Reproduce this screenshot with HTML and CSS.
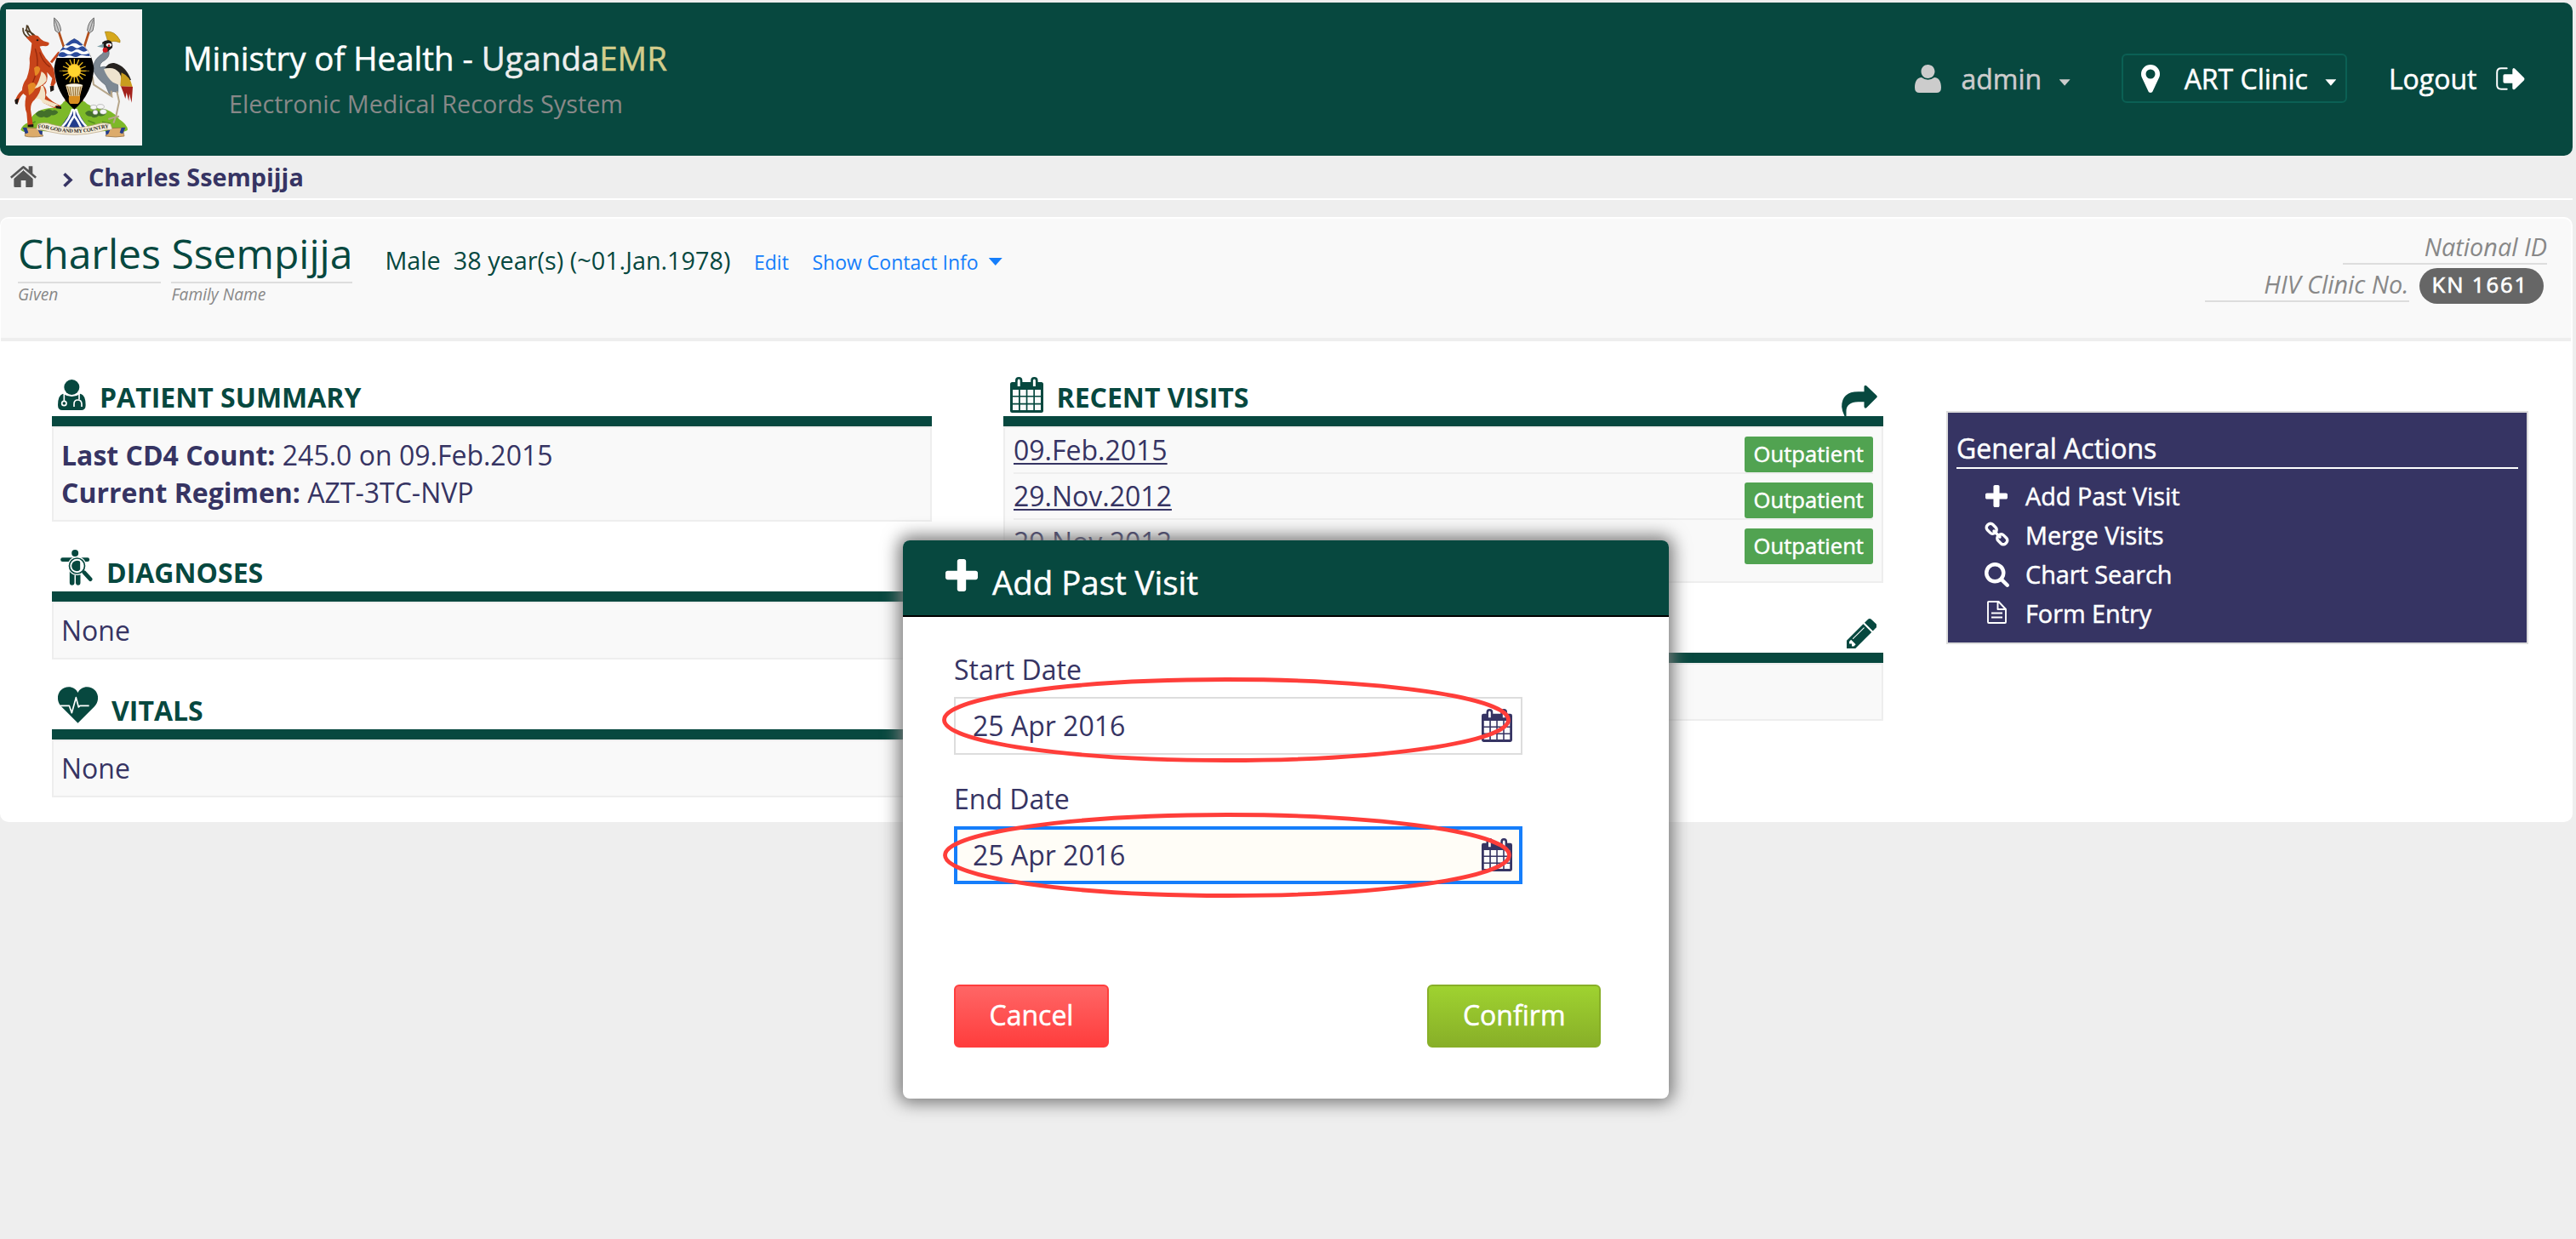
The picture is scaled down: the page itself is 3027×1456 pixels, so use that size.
FILE: index.html
```html
<!DOCTYPE html>
<html lang="en">
<head>
<meta charset="utf-8">
<title>UgandaEMR - Charles Ssempijja</title>
<link rel="stylesheet" href="styles.css">
</head>
<body>
<svg class="defs" width="0" height="0" aria-hidden="true">
  <symbol id="i-calendar" viewBox="0 0 39 42">
    <path fill="currentColor" d="M2.5 6H6V4.2Q6 0 10.2 0T14.4 4.2V6H24.2V4.2Q24.2 0 28.4 0T32.6 4.2V6H36.500Q39 6 39 8.500V39.500Q39 42 36.500 42H2.500Q0 42 0 39.500V8.500Q0 6 2.500 6Z"/>
    <path fill="#fff" d="M8.700 4.500Q8.700 2.500 10.200 2.500T11.700 4.500V11H8.700ZM26.900 4.500Q26.900 2.500 28.400 2.500T29.900 4.500V11H26.900Z"/>
    <path fill="#fbfbfb" d="M3 15h7v7H3zM11.800 15h6.900v7h-6.900zM20.400 15h6.900v7h-6.900zM29 15h7v7h-7zM3 23.600h7v7.200H3zM11.800 23.600h6.900v7.200h-6.900zM20.400 23.600h6.900v7.200h-6.900zM29 23.600h7v7.200h-7zM3 32.400h7v6.600H3zM11.800 32.400h6.900v6.600h-6.900zM20.400 32.400h6.900v6.600h-6.900zM29 32.400h7v6.600h-7z"/>
  </symbol>
  <symbol id="i-plus" viewBox="192 128 1408 1408">
    <path fill="currentColor" d="M1600 736v192q0 40-28 68t-68 28h-416v416q0 40-28 68t-68 28h-192q-40 0-68-28t-28-68v-416h-416q-40 0-68-28t-28-68v-192q0-40 28-68t68-28h416v-416q0-40 28-68t68-28h192q40 0 68 28t28 68v416h416q40 0 68 28t28 68z"/>
  </symbol>
</svg>

<div class="page">
  <header class="topbar">
    <svg class="crest" viewBox="21 33 480 480">
      <rect x="21" y="33" width="480" height="480" fill="#f4f4f4"/>
      <!-- spears -->
      <g stroke="#b4501c" stroke-width="8"><path d="M206 108L236 200M315 108L286 200"/><path d="M236 345L218 412M286 345L304 412" stroke="#8c3a14"/></g>
      <path d="M191 63Q212 78 215 108L206 116L195 108Q188 86 191 63ZM331 63Q310 78 308 108L316 116L327 108Q334 86 331 63Z" fill="#c9c9c9" stroke="#666" stroke-width="3"/>
      <path d="M194 70L207 110M328 70L316 110" stroke="#555" stroke-width="2"/>
      <!-- mound -->
      <path d="M73 458Q78 440 100 432Q120 388 170 382Q215 380 225 358H298Q310 374 350 380Q400 388 420 420Q450 440 450 458Q430 472 380 462L262 466L140 462Q90 474 73 458Z" fill="#7db928"/>
      <path d="M125 402q14-18 30-10q16-14 30-2q12-6 20 6q-8 12-24 10q-10 14-26 6q-18 6-30-10ZM300 398q12-14 22-4q14-12 28 0q14-6 24 6q-10 14-26 8q-16 12-26 2q-16 2-22-12Z" fill="#43702a"/>
      <path d="M105 440l20-12M310 425l25 10M360 430l30 6" stroke="#558f1e" stroke-width="5"/>
      <path d="M262 378L212 450H310Z" fill="#233d8c"/>
      <path d="M256 384Q246 420 218 448M262 380V412M268 384Q278 420 306 448M262 408Q250 424 238 450M262 408Q274 424 286 450" stroke="#fff" stroke-width="8" fill="none"/>
      <g fill="#f6f6f6" stroke="#888" stroke-width="1.500"><ellipse cx="330" cy="378" rx="12" ry="8"/><ellipse cx="354" cy="376" rx="13" ry="8"/><ellipse cx="364" cy="394" rx="12" ry="9"/><ellipse cx="336" cy="396" rx="9" ry="8"/></g>
      <!-- kob -->
      <path d="M99 132Q80 122 81 98M108 128Q90 116 95 88M118 126Q104 112 97 90M124 128Q112 112 88 106" fill="none" stroke="#4c3a22" stroke-width="5"/>
      <path d="M92 132L104 127Q118 120 134 127Q142 138 154 145L172 150Q176 160 162 163Q148 160 140 164Q148 188 162 206Q180 222 190 244L197 290L186 308L178 300L184 276L166 254Q172 290 152 300Q168 316 162 336Q180 358 212 372L214 382L190 380L152 362L140 332L122 352Q108 362 108 386L116 440L98 446L94 398Q84 374 92 338L82 330Q70 340 64 362L52 358Q60 332 78 318Q78 298 94 276Q108 236 104 206Q110 176 112 152Z" fill="#c7441a"/>
      <path d="M124 172Q138 214 128 252Q120 290 100 318M140 184Q150 220 176 236" stroke="#96290c" stroke-width="4" fill="none"/>
      <path d="M98 300Q120 280 128 304Q120 326 102 336ZM120 240Q134 226 142 242Q138 262 124 268Z" fill="#e58a25"/>
      <path d="M146 252Q166 262 164 284Q150 304 122 312Q140 286 146 252ZM152 302Q164 330 158 350L206 370L190 378L150 362Q142 340 122 352Q144 326 144 304Z" fill="#f2e3c6"/>
      <path d="M180 220L209 184" stroke="#c7441a" stroke-width="9"/>
      <path d="M176 304l14-2v16l-12 6zM98 440l20-2v10h-20zM196 372l20 4v8l-18-2zM52 352l14-6-4 22-8-2z" fill="#1b1512"/>
      <ellipse cx="132" cy="142" rx="4" ry="3" fill="#1b1512"/>
      <!-- crane -->
      <path d="M370 112Q404 106 423 142V150Q398 140 382 152Z" fill="#d6a81c" stroke="#9a7a14" stroke-width="2"/>
      <path d="M384 180Q388 200 370 212Q350 222 352 238Q380 228 396 250Q420 284 416 326L398 322L388 338L372 300Q340 276 328 246Q328 214 352 196Q368 188 366 172Z" fill="#7d8893" stroke="#55606b" stroke-width="2"/>
      <path d="M370 240Q382 220 402 222Q444 232 462 282L430 290Q412 240 370 240Z" fill="#26221f"/>
      <path d="M366 244Q400 232 420 256Q434 278 426 302L398 290Q378 276 366 244Z" fill="#eee3cf"/>
      <path d="M428 256Q460 270 467 306L424 304Z" fill="#c99c1e"/>
      <path d="M426 304L468 306L464 362L456 330L454 356L446 326L442 348L434 324Z" fill="#a3201a"/>
      <path d="M360 150Q370 140 384 142Q400 148 396 168L380 182L366 170Z" fill="#1d1a18"/>
      <path d="M366 154L342 164L364 168Z" fill="#7fa0a8"/><ellipse cx="384" cy="158" rx="10" ry="6" fill="#fff"/><circle cx="384" cy="161" r="4" fill="#d22"/>
      <circle cx="371" cy="176" r="9" fill="#d0151c"/>
      <path d="M326 270L330 298L394 340L392 320M412 322L420 358L408 414M408 412L382 420M408 412L400 434M408 412L420 410" stroke="#b6a68a" stroke-width="6" fill="none"/>
      <!-- shield -->
      <path d="M262 136Q322 168 331 240Q326 330 262 386Q196 330 191 240Q200 168 262 136Z" fill="#000"/>
      <path d="M262 136Q296 154 315 187L322 204H201L208 187Q228 154 262 136Z" fill="#fff"/>
      <path d="M262 136Q280 144 292 158Q284 164 274 156Q262 148 250 156Q240 164 231 158Q244 144 262 136ZM222 166q10 8 20 0t20 0 20 0 18 2l8 10q-12 8-24 0t-22 0-22 0-28 2zM208 188q12-8 24 0t24 0 24 0 34 0l3 10q-14 0-20-2-10-4-20 2t-22 0-22 0-28 0z" fill="#2a4a9c"/>
      <g stroke="#e9b91c" stroke-width="4"><path d="M262 207V292M219 250H305M232 220L292 280M292 220L232 280M246 210L278 290M278 210L246 290M222 234L302 266M222 266L302 234"/></g>
      <path d="M209 250H222M302 250H315" stroke="#8b6f16" stroke-width="3"/>
      <circle cx="262" cy="249" r="23" fill="#ffd52e" stroke="#d9981c" stroke-width="2"/>
      <path d="M232 300Q262 290 291 300L282 340Q284 360 274 366H248Q240 360 243 340Z" fill="#d98e1f"/>
      <path d="M232 302L243 338L280 338L291 302Z" fill="#ead9b4"/><path d="M238 304L246 336M247 306L251 338M257 306L259 338M267 306L265 338M276 306L272 338M285 304L279 336" stroke="#8c6427" stroke-width="3"/>
      <ellipse cx="262" cy="301" rx="30" ry="6" fill="#faf6ea" stroke="#98865c"/>
      <!-- ribbon -->
      <path d="M82 450L140 452L152 480Q112 486 88 480Q92 464 82 450ZM440 450L384 452L372 480Q410 486 438 480Q432 464 440 450Z" fill="#dcab6a" stroke="#8b6a3e" stroke-width="2"/>
      <path d="M80 450l14 0 6 18-10 4zM442 450l-14 0-6 18 10 4zM134 458l16 4-2 14-8-4zM388 458l-16 4 2 14 8-4z" fill="#233d8c"/>
      <path d="M133 437Q160 430 180 438Q262 462 342 438Q364 430 390 437L396 456Q372 456 352 464Q262 486 172 464Q152 456 128 458Z" fill="#f7eedb" stroke="#b39e7c" stroke-width="2"/>
      <path id="motto" d="M134 453Q152 450 172 456Q262 480 350 456Q372 450 392 452" fill="none"/>
      <text class="motto"><textPath href="#motto" textLength="252">FOR GOD AND MY COUNTRY</textPath></text>
    </svg>
    <div class="brand">
      <div class="brand-title">Ministry of Health - <span class="soft">Uganda</span><span class="gold">EMR</span></div>
      <div class="brand-sub">Electronic Medical Records System</div>
    </div>
    <nav class="usernav">
      <svg class="ico-user" viewBox="0 0 31 33"><path fill="currentColor" d="M15.500 0C20 0 23.500 3.600 23.500 8S20 16 15.500 16 7.500 12.500 7.500 8 11 0 15.500 0ZM8 15Q15.500 20.500 23 15C28.500 15 31 20 31 27Q31 33 25.500 33H5.500Q0 33 0 27C0 20 2.500 15 8 15Z"/></svg>
      <span class="user-name">admin</span><i class="caret"></i>
      <div class="location">
        <svg class="ico-pin" viewBox="384 128 1024 1536"><path fill="currentColor" d="M1152 640q0-106-75-181t-181-75-181 75-75 181 75 181 181 75 181-75 75-181zm256 0q0 109-33 179l-364 774q-16 33-47.500 52t-67.500 19-67.500-19-46.500-52l-365-774q-33-70-33-179 0-212 150-362t362-150 362 150 150 362z"/></svg>
        <span class="location-name">ART Clinic</span><i class="caret"></i>
      </div>
      <span class="logout">Logout</span>
      <svg class="ico-logout" viewBox="1360 82 102 82"><path fill="none" stroke="currentColor" stroke-width="6" stroke-linecap="round" d="M1398 86H1378Q1363 86 1363 101V146Q1363 160 1378 160H1398"/><path fill="currentColor" d="M1390 107H1418V90Q1420 82 1427 87L1459 119Q1463 124 1459 129L1427 160Q1420 165 1418 157V139H1390Q1385 139 1385 134V112Q1385 107 1390 107Z"/></svg>
    </nav>
  </header>

  <div class="crumbs">
    <svg class="ico-home" viewBox="36 582 93 75"><path fill="#555" d="M82.500 595L116 624V653Q116 657 112 657H91V633H74V657H53Q49 657 49 653V624Z"/><path fill="none" stroke="#eee" stroke-width="3" d="M44 630L82.500 596L121 630"/><path fill="#555" d="M36 620L78 584Q82.500 580 87 584L101 596V583H115V608L129 620L124 626L82.500 591L41 626Z"/></svg>
    <svg class="ico-chev" viewBox="0 0 12 17"><path fill="none" stroke="#363463" stroke-width="3.600" d="M1.500 1.300L9 8.500L1.500 15.700"/></svg>
    <span>Charles Ssempijja</span>
  </div>

  <main class="card">
    <section class="patient">
      <div class="name"><div class="name-value">Charles</div><div class="name-label">Given</div></div>
      <div class="name"><div class="name-value">Ssempijja</div><div class="name-label">Family Name</div></div>
      <div class="demo"><span>Male</span><span class="age">38 year(s) (~01.Jan.1978)</span><a class="edit">Edit</a><a class="contact">Show Contact Info</a><i class="caret blue"></i></div>
      <div class="ids">
        <div class="id-row"><span class="id-label">National ID</span></div>
        <div class="id-row second"><span class="id-label">HIV Clinic No.</span><span class="pill">KN 1661</span></div>
      </div>
    </section>

    <div class="columns">
      <div class="col">
        <h3 class="first"><svg class="ico-doctor" viewBox="54 48 99 108"><circle cx="103" cy="75" r="27" fill="currentColor"/><path fill="currentColor" d="M72 98Q103 118 134 98Q152 103 152 138Q152 156 136 156H70Q54 156 54 138Q54 103 72 98Z"/><g fill="none" stroke="#fff" stroke-width="5"><path d="M76 97V124M129 97V118M111 144V134Q111 120 124 120T138 134V144"/><circle cx="76" cy="132" r="8"/></g></svg>PATIENT SUMMARY</h3>
        <div class="box"><div><b>Last CD4 Count:</b> 245.0 on 09.Feb.2015</div><div><b>Current Regimen:</b> AZT-3TC-NVP</div></div>
        <h3><svg class="ico-diag" viewBox="64 648 113 126"><g fill="currentColor"><circle cx="115" cy="660" r="12"/><rect x="64" y="676" width="102" height="14" rx="7"/><path d="M96 680H134V764Q134 773 126 773T117.500 764V738H113V764Q113 773 104.500 773T96 764Z"/></g><circle cx="122" cy="705" r="33" fill="#fff"/><path d="M146 729L168 751" stroke="#fff" stroke-width="22"/><circle cx="122" cy="705" r="27" fill="none" stroke="currentColor" stroke-width="5"/><path fill="currentColor" d="M122 686Q133 686 133 692V718Q130 724 121 724Q103 721 103 705T122 686Z"/><path d="M147 728L169 752" stroke="currentColor" stroke-width="14" stroke-linecap="round"/></svg>DIAGNOSES</h3>
        <div class="box">None</div>
        <h3><svg class="ico-heart" viewBox="54 1133 141 127"><path fill="currentColor" d="M124.500 1260L66 1202C50 1184 50 1160 64 1145C82 1126 114 1130 124.500 1153C135 1130 167 1126 185 1145C199 1160 199 1184 183 1202Z"/><path fill="none" stroke="#fff" stroke-width="5" stroke-linejoin="round" d="M62 1199H94L103 1224L118 1170L127 1204L132 1199H164"/></svg>VITALS</h3>
        <div class="box">None</div>
      </div>

      <div class="col mid">
        <h3 class="first"><svg class="ico-cal"><use href="#i-calendar"/></svg>RECENT VISITS<svg class="ico-share" viewBox="26 69 125 108"><path fill="currentColor" d="M36 177Q27 160 26 144Q26 91 84 91H105V73Q107 66 113 70L149 104Q153 108 149 112L113 148Q107 152 105 144V127H84Q42 128 42 160V177Z"/></svg></h3>
        <div class="box visits">
          <div class="visit"><a>09.Feb.2015</a><span class="badge">Outpatient</span></div>
          <div class="visit"><a>29.Nov.2012</a><span class="badge">Outpatient</span></div>
          <div class="visit"><a>29.Nov.2012</a><span class="badge">Outpatient</span></div>
        </div>
        <h3><svg class="ico-pencil" viewBox="128 149 1515 1515"><path fill="currentColor" d="M491 1536l91-91-235-235-91 91v107h128v128h107zm523-928q0-22-22-22-10 0-17 7l-542 542q-7 7-7 17 0 22 22 22 10 0 17-7l542-542q7-7 7-17zm-54-192l416 416-832 832h-416v-416zm683 96q0 53-37 90l-166 166-416-416 166-165q36-38 90-38 53 0 91 38l235 234q37 39 37 91z"/></svg></h3>
        <div class="box empty"></div>
      </div>

      <aside class="actions">
        <h4>General Actions</h4>
        <ul>
          <li><span class="ai"><svg width="26" height="26"><use href="#i-plus"/></svg></span>Add Past Visit</li>
          <li><span class="ai up"><svg width="29" height="29" viewBox="0 0 29 29"><g fill="none" stroke="#fff" stroke-width="3.400"><rect x="-6.200" y="-4.500" width="12.400" height="9" rx="3.800" transform="translate(8.200 8.200) rotate(45)"/><rect x="-6.200" y="-4.500" width="12.400" height="9" rx="3.800" transform="translate(20.800 20.800) rotate(45)"/><path d="M11 11L18 18" stroke-linecap="round"/></g></svg></span>Merge Visits</li>
          <li><span class="ai"><svg width="29" height="29" viewBox="64 128 1664 1664"><path fill="#fff" d="M1216 832q0-185-131.500-316.500t-316.500-131.500-316.500 131.500-131.500 316.500 131.500 316.500 316.500 131.500 316.500-131.500 131.500-316.500zm512 832q0 52-38 90t-90 38q-54 0-90-38l-343-342q-179 124-399 124-143 0-273.500-55.500t-225-150-150-225-55.500-273.500 55.500-273.500 150-225 225-150 273.500-55.500 273.500 55.500 225 150 150 225 55.500 273.500q0 220-124 399l343 343q37 37 37 90z"/></svg></span>Chart Search</li>
          <li><span class="ai up"><svg width="23" height="27" viewBox="0 0 23 27"><path fill="none" stroke="#fff" stroke-width="1.900" stroke-linejoin="round" d="M1 2V25Q1 26 2 26H21Q22 26 22 25V10L13.500 1H2Q1 1 1 2ZM12.500 1V10H22M5 14.500H18M5 19.500H18"/></svg></span>Form Entry</li>
        </ul>
      </aside>
    </div>
  </main>
</div>

<div class="dialog">
  <div class="dialog-head"><svg width="38" height="38"><use href="#i-plus"/></svg><h2>Add Past Visit</h2></div>
  <div class="dialog-body">
    <label>Start Date</label>
    <div class="field">25 Apr 2016<svg class="field-cal"><use href="#i-calendar"/></svg></div>
    <label>End Date</label>
    <div class="field focus">25 Apr 2016<svg class="field-cal"><use href="#i-calendar"/></svg></div>
    <div class="buttons"><span class="btn cancel">Cancel</span><span class="btn confirm">Confirm</span></div>
  </div>
  <svg class="marks" viewBox="0 0 900 656"><g fill="none" stroke="#ff3e3a" stroke-width="4.800"><ellipse cx="380" cy="211" rx="331.500" ry="47.500"/><ellipse cx="381" cy="370" rx="331.500" ry="47.500"/></g></svg>
</div>
</body>
</html>
```
FILE: styles.css
```css
* { box-sizing: border-box; }
html { height: 100%; overflow: hidden; }
body {
  margin: 0;
  height: 100%;
  padding-top: 3px;
  background: #eee;
  color: #363463;
  font: 32px/44px "Open Sans", sans-serif;
  overflow: hidden;
}
.defs { position: absolute; }
svg { display: block; flex: none; }
.page { width: 3023px; }

/* top bar */
.topbar {
  display: flex;
  align-items: flex-start;
  height: 180px;
  padding: 8px 56px 0 7px;
  background: #07483f;
  border-radius: 10px;
  color: #fff;
  white-space: nowrap;
}
.crest { width: 160px; height: 160px; }
.motto { font: bold 19px "Liberation Serif", serif; fill: #2c2622; }
.brand { margin: 35px 0 0 48px; }
.brand-title { font-size: 38.4px; line-height: 44px; }
.soft { color: #eee; }
.gold { color: #d2cd8c; }
.brand-sub { margin-top: 10px; padding-left: 54px; font-size: 28.8px; line-height: 43px; color: #888; }
.usernav { display: flex; align-items: center; height: 58px; margin: 52px 0 0 auto; }
.brand-title, .usernav, .badge, .actions, .dialog-head, .btn { -webkit-text-stroke: 0.5px; }
.ico-user { width: 31px; height: 33px; color: #ccc; }
.user-name { margin-left: 23.500px; padding-top: 1px; color: #ccc; }
.caret {
  width: 13px;
  height: 7.500px;
  margin: 10px 0 0 20.500px;
  background: currentColor;
  clip-path: polygon(0 0, 100% 0, 50% 100%);
}
.user-name + .caret { background: #ccc; }
.location {
  display: flex;
  align-items: center;
  height: 58px;
  margin-left: 60.500px;
  padding: 0 11px 0 20.500px;
  border: 2px solid #0b6054;
  border-radius: 6px;
}
.ico-pin { width: 22px; height: 33px; }
.location-name { margin-left: 29px; padding-top: 1px; }
.logout { margin-left: 48.500px; padding-top: 1px; }
.ico-logout { width: 34px; height: 27px; margin-left: 22.500px; }

/* breadcrumbs */
.crumbs {
  display: flex;
  align-items: center;
  height: 52px;
  padding-left: 12px;
  border-bottom: 2px solid #fff;
  font-size: 28.8px;
  font-weight: 700;
}
.ico-home { width: 31px; height: 25px; margin-bottom: 2px; }
.ico-chev { width: 12px; height: 17px; margin: 7px 18px 0 31px; }

/* patient card */
.card { height: 711px; margin-top: 20px; padding: 2px 2px 0 1px; background: #fff; border-radius: 10px; }
.patient {
  display: flex;
  align-items: flex-start;
  height: 144px;
  padding: 8px 28px 0 20px;
  background: #f9f9f9;
  border-bottom: 4px solid #eee;
  border-radius: 8px 8px 0 0;
  color: #07483f;
  white-space: nowrap;
}
.name { margin-right: 12.500px; }
.name-value { font-size: 48px; line-height: 66px; border-bottom: 2px solid #ddd; }
.name-label { font-size: 19.2px; line-height: 25px; font-style: italic; color: #888; }
.demo { display: flex; align-items: baseline; margin: 19px 0 0 25.500px; font-size: 28.8px; }
.age { margin-left: 15px; }
.demo a { font-size: 23.04px; color: #157efb; }
.edit { margin-left: 27.500px; }
.contact { margin-left: 27.500px; }
.caret.blue { align-self: center; width: 16px; height: 9px; margin: 1px 0 0 12px; background: #157efb; }
.ids { margin: 5px 0 0 auto; font-size: 28.8px; line-height: 39px; font-style: italic; color: #888; }
.id-row { display: flex; justify-content: flex-end; }
.id-row.second { margin-top: 3px; padding-right: 4px; }
.id-label { width: 240px; height: 41px; text-align: right; border-bottom: 2px solid #ddd; }
.pill {
  height: 42px;
  margin: 1px 0 0 12px;
  padding: 0 18px 0 15px;
  border-radius: 21px;
  background: #666;
  color: #fff;
  font-size: 25.6px;
  font-style: normal;
  font-weight: 400;
  letter-spacing: 1.900px;
  -webkit-text-stroke: 0.7px;
}

/* columns */
.columns { display: flex; align-items: flex-start; padding: 0 50px 0 60px; }
.col { width: 1034px; }
.mid { margin: 0 74px 0 84px; }
h3 {
  display: flex;
  align-items: flex-end;
  height: 94px;
  margin: 0;
  border-bottom: 12px solid #07483f;
  padding-left: 7px;
  color: #07483f;
  font-size: 32px;
  line-height: 45px;
}
h3.first { height: 100px; }
.ico-doctor { width: 33px; height: 36px; margin: 0 16px 7px 0; }
.ico-diag { width: 38px; height: 42px; margin: 0 16px 7px 3px; }
.ico-heart { width: 47px; height: 43px; margin: 0 16px 7px 0; }
.ico-cal { width: 39px; height: 42px; margin: 0 15.500px 4px 1px; }
.ico-share { width: 42px; height: 36px; margin: 0 7.500px 0 auto; }
.ico-pencil { width: 35.500px; height: 35.500px; margin: 0 8px 5px auto; }
.box { padding: 9.500px 9px 10.500px; background: #f9f9f9; border: 2px solid #eee; }
.visits { height: 184px; padding: 0 10px; }
.visit { display: flex; align-items: flex-end; justify-content: space-between; height: 54px; border-bottom: 2px solid #eee; }
.visit:last-child { height: 52px; border: 0; }
.visit a { line-height: 51px; align-self: flex-start; text-decoration: underline; text-decoration-thickness: 2px; text-underline-offset: 3px; }
.badge { height: 42px; padding: 0 11px; background: #51a351; border-radius: 3px; color: #fff; font-size: 25.6px; line-height: 41px; }
.empty { height: 68px; }

.actions { width: 684px; height: 274px; margin-top: 82px; padding: 20px 10px 0; background: #363463; border: 2px solid #ddd; color: #fff; }
h4 { margin: 0; font-size: 32px; font-weight: 400; line-height: 44px; border-bottom: 2px solid #fff; }
.actions ul { margin: 9px 0 0; padding: 0 0 0 30px; list-style: none; font-size: 28.8px; line-height: 46px; }
.actions li { display: flex; align-items: center; height: 46px; }
.ai { display: flex; justify-content: center; width: 34px; margin-right: 17px; }
.ai.up { margin-bottom: 4px; }

/* dialog */
.dialog {
  position: absolute;
  left: 1061px;
  top: 635px;
  width: 900px;
  height: 656px;
  background: #fff;
  border-radius: 8px;
  box-shadow: 0 0 20px 5px #777;
}
.dialog-head {
  display: flex;
  height: 90px;
  padding: 22px 0 0 49.500px;
  background: #07483f;
  border-bottom: 2px solid #000;
  border-radius: 8px 8px 0 0;
  color: #fff;
}
h2 { margin: 5px 0 0 17.500px; font-size: 38.4px; font-weight: 400; line-height: 44px; }
.dialog-body { padding: 39.500px 80px 0 60px; }
.dialog label { display: block; }
.field {
  display: flex;
  justify-content: space-between;
  align-items: center;
  width: 668px;
  height: 68px;
  margin: 10.500px 0 29.500px;
  padding: 0 10px 0 20px;
  border: 2px solid #ddd;
}
.field.focus { padding: 0 8px 0 18px; border: 4px solid #157efb; background: #fffdf7; }
.field-cal { width: 36px; height: 39px; margin-bottom: 2px; }
.buttons { display: flex; justify-content: space-between; margin-top: 118px; }
.btn { height: 74px; padding: 0 39.500px; border: 2px solid; border-radius: 6px; color: #fff; line-height: 67px; }
.cancel { background: linear-gradient(#ff6666, #ff3d3d); border-color: #ff3d3d; }
.confirm { background: linear-gradient(#9fd230, #88af28); border-color: #88af28; }
.marks { position: absolute; left: 0; top: 0; width: 900px; height: 656px; overflow: visible; }
```
